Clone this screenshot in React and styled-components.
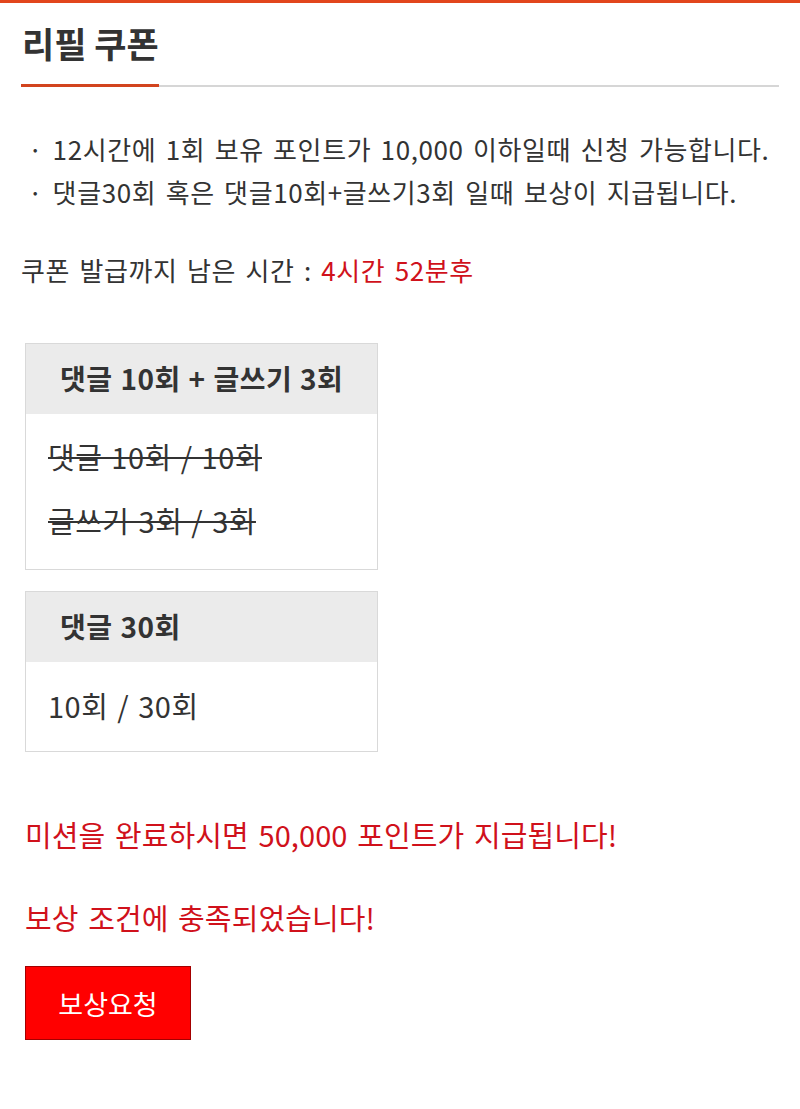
import React from "react";
import styled, { createGlobalStyle } from "styled-components";

const Global = createGlobalStyle`
  html, body { margin: 0; padding: 0; background: #fff; }
  body { font-family: "Noto Sans CJK KR", "Noto Sans", sans-serif; color: #333; }
`;

const TopBar = styled.div`
  height: 3px;
  background: #e2461c;
`;

const Page = styled.main`
  padding: 0 21px 40px 21px;
`;

const TitleWrap = styled.header`
  position: relative;
  border-bottom: 2px solid #d6d6d6;
  padding: 11px 0 13px 1px;
`;

const Title = styled.h1`
  margin: 0;
  font-size: 35px;
  font-weight: 700;
  line-height: 58px;
  color: #333;
`;

const Accent = styled.span`
  position: absolute;
  left: 0;
  bottom: -2px;
  width: 138px;
  height: 3px;
  background: #d2441e;
`;

const Notice = styled.ul`
  list-style: none;
  margin: 40px 0 0 0;
  padding: 0 0 0 7px;
`;

const NoticeItem = styled.li`
  font-size: 26px;
  line-height: 43px;
  color: #333;
  letter-spacing: 0.6px;
  word-spacing: 3px;
`;

const Remaining = styled.p`
  margin: 37px 0 0 0;
  font-size: 26px;
  line-height: 40px;
  color: #333;
  letter-spacing: 0.6px;
  word-spacing: 3px;
`;

const RedText = styled.span`
  color: #d0111b;
`;

const Missions = styled.section`
  margin: 53px 0 0 4px;
  display: flex;
  flex-direction: column;
  gap: 21px;
`;

const Card = styled.div`
  width: 351px;
  border: 1px solid #d9d9d9;
`;

const CardHead = styled.div`
  height: 70px;
  background: #ebebeb;
  display: flex;
  align-items: center;
  padding: 0 0 3px ${(p) => p.$pad}px;
  box-sizing: border-box;
  font-size: 28px;
  font-weight: 700;
  color: #333;
  letter-spacing: 0.5px;
  word-spacing: 1px;
`;

const CardBody = styled.div`
  padding: ${(p) => p.$pad};
  display: flex;
  flex-direction: column;
  gap: 24px;
`;

const Progress = styled.div`
  font-size: 29px;
  line-height: 40px;
  color: #333;
  padding-left: 22px;
  letter-spacing: 0.5px;
  word-spacing: 2px;
  text-decoration: ${(p) => (p.$done ? "line-through" : "none")};
  text-decoration-thickness: 2px;
`;

const Message = styled.p`
  margin: ${(p) => p.$mt}px 0 0 4px;
  font-size: 29px;
  line-height: 40px;
  color: #d0111b;
  letter-spacing: 0.1px;
  word-spacing: 3px;
`;

const RewardButton = styled.button`
  margin: 29px 0 0 4px;
  width: 166px;
  height: 74px;
  background: #ff0000;
  border: 1px solid #a30000;
  color: #fff;
  font-family: "Noto Sans CJK KR", "Noto Sans", sans-serif;
  font-size: 27px;
  cursor: pointer;
`;

export default function App() {
  return (
    <>
      <Global />
      <TopBar />
      <Page>
        <TitleWrap>
          <Title>리필 쿠폰</Title>
          <Accent />
        </TitleWrap>
        <Notice>
          <NoticeItem>· 12시간에 1회 보유 포인트가 10,000 이하일때 신청 가능합니다.</NoticeItem>
          <NoticeItem>· 댓글30회 혹은 댓글10회+글쓰기3회 일때 보상이 지급됩니다.</NoticeItem>
        </Notice>
        <Remaining>
          쿠폰 발급까지 남은 시간 : <RedText>4시간 52분후</RedText>
        </Remaining>
        <Missions>
          <Card>
            <CardHead $pad={34}>댓글 10회 + 글쓰기 3회</CardHead>
            <CardBody $pad="22px 0 29px 0">
              <Progress $done>댓글 10회 / 10회</Progress>
              <Progress $done>글쓰기 3회 / 3회</Progress>
            </CardBody>
          </Card>
          <Card>
            <CardHead $pad={34}>댓글 30회</CardHead>
            <CardBody $pad="23px 0 26px 0">
              <Progress>10회 / 30회</Progress>
            </CardBody>
          </Card>
        </Missions>
        <Message $mt={62}>미션을 완료하시면 50,000 포인트가 지급됩니다!</Message>
        <Message $mt={43}>보상 조건에 충족되었습니다!</Message>
        <RewardButton>보상요청</RewardButton>
      </Page>
    </>
  );
}
